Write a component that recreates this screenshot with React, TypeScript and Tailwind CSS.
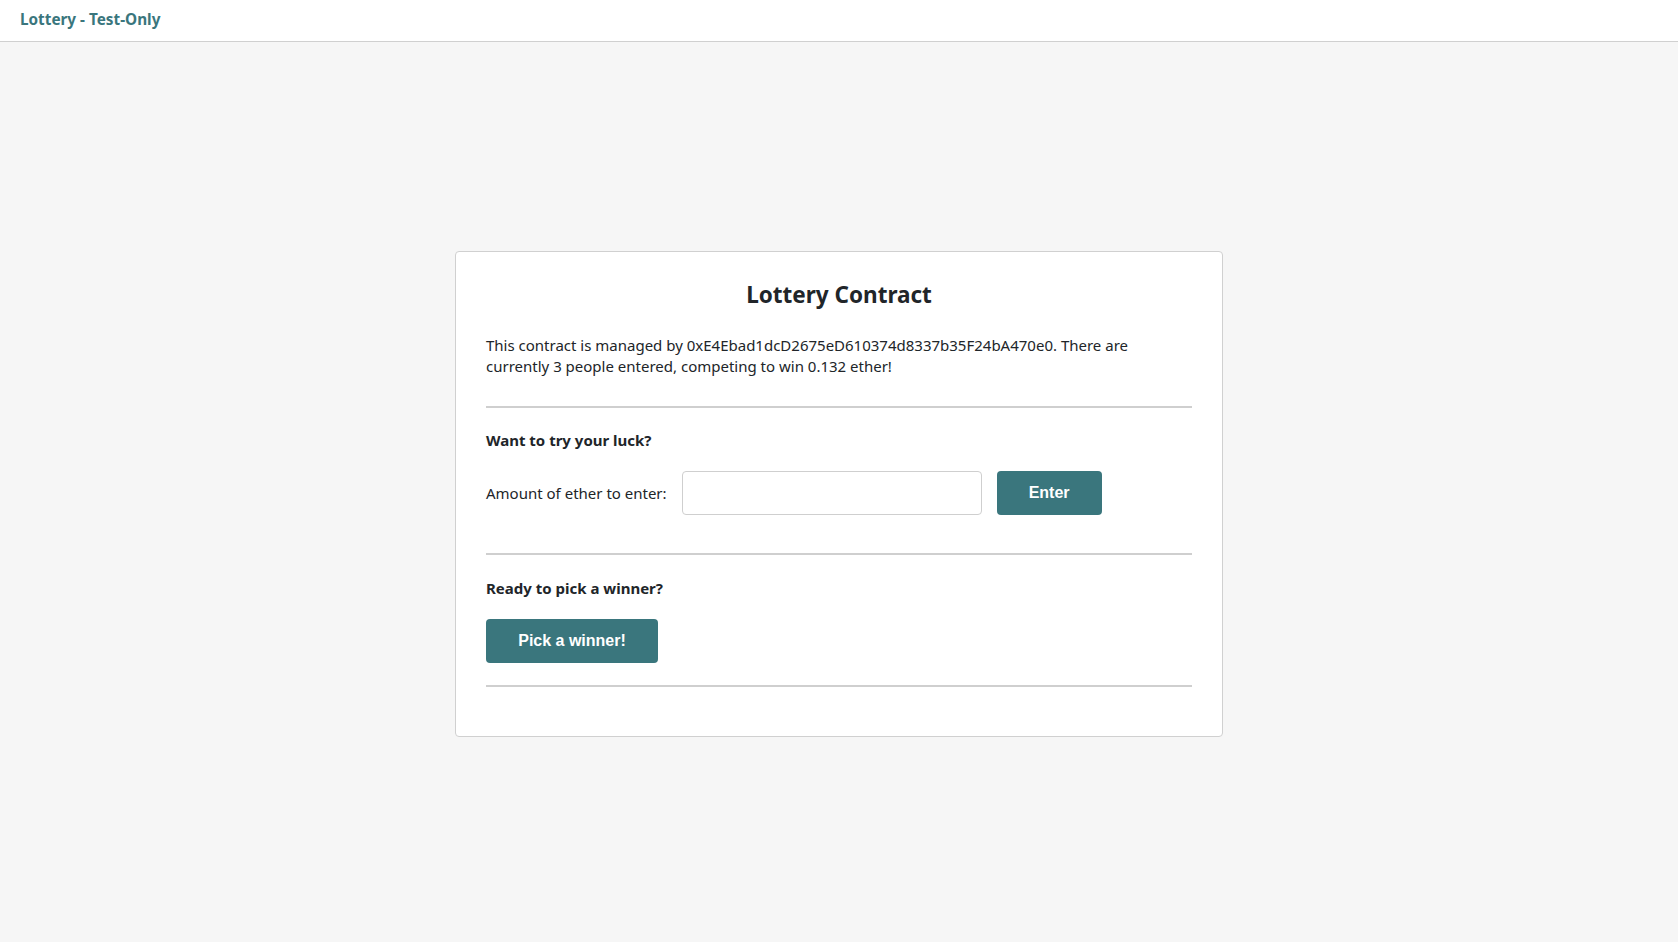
import React from "react";

export default function App() {
  return (
    <div className="min-h-[942px] bg-[#f6f6f6] font-['Noto_Sans',sans-serif] text-[#212529]">
      <header className="h-[42px] bg-white border-b border-[#d0d0d0] flex items-center px-5">
        <span className="text-[15.3px] font-bold text-[#3a767d] leading-none -mt-[2px]">Lottery - Test-Only</span>
      </header>
      <main className="flex justify-center pt-[209px]">
        <div className="w-[768px] bg-white border border-[#d0d0d0] rounded-[4px] px-[30px] pt-[27px] pb-[49px]">
          <h1 className="text-center text-[22.5px] font-bold leading-[32px] text-[#212529]">Lottery Contract</h1>
          <p className="mt-[24px] text-[15px] leading-[21px] text-[#212529]">
            This contract is managed by 0xE4Ebad1dcD2675eD610374d8337b35F24bA470e0. There are<br />currently 3 people entered, competing to win 0.132 ether!
          </p>
          <hr className="mt-[29px] border-0 h-[2px] bg-[#cfcfcf]" />
          <h4 className="mt-[22px] text-[15px] font-bold leading-[20px]">Want to try your luck?</h4>
          <div className="mt-[21px] flex items-center">
            <label className="text-[15px] leading-[20px] mr-[15px]">Amount of ether to enter:</label>
            <input className="w-[300px] h-[44px] border border-[#cfcfcf] rounded-[4px] px-3 outline-none" />
            <button className="ml-[15px] w-[105px] h-[44px] rounded-[4px] bg-[#3a767d] text-white font-bold text-[16px] font-['Liberation_Sans',Arial,sans-serif]">
              Enter
            </button>
          </div>
          <hr className="mt-[38px] border-0 h-[2px] bg-[#cfcfcf]" />
          <h4 className="mt-[23px] text-[15px] font-bold leading-[20px]">Ready to pick a winner?</h4>
          <button className="mt-[21px] w-[172px] h-[44px] rounded-[4px] bg-[#3a767d] text-white font-bold text-[16px] font-['Liberation_Sans',Arial,sans-serif]">
            Pick a winner!
          </button>
          <hr className="mt-[22px] border-0 h-[2px] bg-[#cfcfcf]" />
        </div>
      </main>
    </div>
  );
}
